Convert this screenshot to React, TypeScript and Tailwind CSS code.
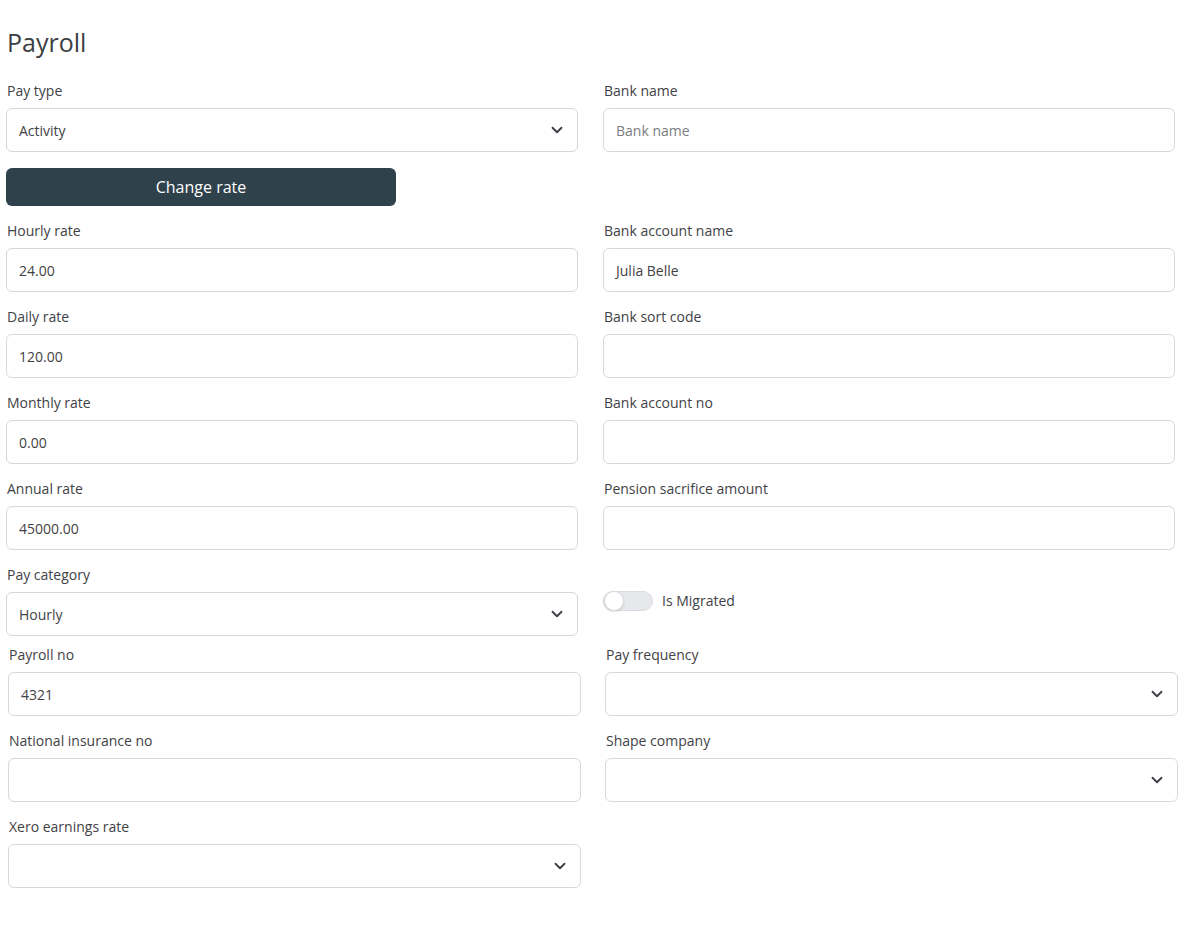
const font = { fontFamily: '"Open Sans", "Liberation Sans", sans-serif' };

const Label = ({ children }: { children: React.ReactNode }) => (
  <div className="h-5 mb-[7px] text-[14px] leading-5 text-[#3f4246] pl-px">{children}</div>
);

const Chevron = () => (
  <svg width="12" height="8" viewBox="0 0 12 8" fill="none" className="text-[#3a3d42]">
    <path d="M1.5 1.75L6 6.25L10.5 1.75" stroke="currentColor" strokeWidth="1.8" strokeLinecap="round" strokeLinejoin="round" />
  </svg>
);

const TextField = ({ label, value, placeholder }: { label: string; value?: string; placeholder?: string }) => (
  <div>
    <Label>{label}</Label>
    <div className="h-[44px] rounded-[6px] border border-[#d9d9dc] bg-white px-3 flex items-center text-[14px] text-[#3f4246]">
      {value ? value : <span className="text-[#7a7d82]">{placeholder}</span>}
    </div>
  </div>
);

const SelectField = ({ label, value }: { label: string; value?: string }) => (
  <div>
    <Label>{label}</Label>
    <div className="h-[44px] rounded-[6px] border border-[#d9d9dc] bg-white pl-3 pr-[14px] flex items-center justify-between text-[14px] text-[#3f4246]">
      <span>{value}</span>
      <Chevron />
    </div>
  </div>
);

export default function App() {
  return (
    <div className="min-h-screen bg-white" style={font}>
      <div className="pl-[6px] pt-[26px]">
        <h1 className="text-[25px] leading-8 text-[#3b3e42] pl-px mb-[23px]">Payroll</h1>

        <div className="grid grid-cols-[572px_572px] gap-x-[25px] gap-y-[15px]">
          <SelectField label="Pay type" value="Activity" />
          <TextField label="Bank name" placeholder="Bank name" />

          <button className="mt-px h-[38px] w-[390px] rounded-[6px] bg-[#2f414b] text-white text-[16px]">
            Change rate
          </button>
          <div />

          <TextField label="Hourly rate" value="24.00" />
          <TextField label="Bank account name" value="Julia Belle" />
          <TextField label="Daily rate" value="120.00" />
          <TextField label="Bank sort code" />
          <TextField label="Monthly rate" value="0.00" />
          <TextField label="Bank account no" />
          <TextField label="Annual rate" value="45000.00" />
          <TextField label="Pension sacrifice amount" />
          <SelectField label="Pay category" value="Hourly" />
          <div className="pt-[25px]">
            <label className="flex items-center gap-[9px]">
              <span className="relative w-[50px] h-[20px] rounded-full bg-[#e6e8eb] border border-[#d9dce0]">
                <span className="absolute left-0 top-[-1px] w-[20px] h-[20px] rounded-full bg-white border border-[#d9dce0] shadow-sm" />
              </span>
              <span className="text-[14px] text-[#3f4246]">Is Migrated</span>
            </label>
          </div>
        </div>

        <div className="ml-[2px] mt-[9px] grid grid-cols-[573px_573px] gap-x-[24px] gap-y-[15px]">
          <TextField label="Payroll no" value="4321" />
          <SelectField label="Pay frequency" />
          <TextField label="National insurance no" />
          <SelectField label="Shape company" />
          <SelectField label="Xero earnings rate" />
        </div>
      </div>
    </div>
  );
}
